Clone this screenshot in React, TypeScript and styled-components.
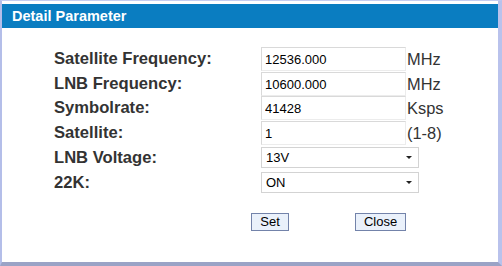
import React from 'react'
import styled, { createGlobalStyle } from 'styled-components'

const GlobalStyle = createGlobalStyle`
  html, body {
    margin: 0;
    padding: 0;
    background: #ffffff;
  }
  * {
    box-sizing: border-box;
  }
`;

type Field =
  | { label: string; kind: 'input'; value: string; unit: string; top: number }
  | { label: string; kind: 'select'; value: string; top: number };

const fields: Field[] = [
  { label: 'Satellite Frequency:', kind: 'input', value: '12536.000', unit: 'MHz', top: 0 },
  { label: 'LNB Frequency:', kind: 'input', value: '10600.000', unit: 'MHz', top: 1 },
  { label: 'Symbolrate:', kind: 'input', value: '41428', unit: 'Ksps', top: 0 },
  { label: 'Satellite:', kind: 'input', value: '1', unit: '(1-8)', top: 1 },
  { label: 'LNB Voltage:', kind: 'select', value: '13V', top: 2 },
  { label: '22K:', kind: 'select', value: 'ON', top: 4 },
];

const App: React.FC = () => {
  return (
    <>
      <GlobalStyle />
      <Frame>
        <Header>Detail Parameter</Header>
        <Body>
          <Form>
            {fields.map((f) => (
              <Row key={f.label} $top={f.top} $height={f.kind === 'input' ? 24 : 21}>
                <Label>{f.label}</Label>
                {f.kind === 'input' ? (
                  <>
                    <TextInput type="text" defaultValue={f.value} />
                    <Unit>{f.unit}</Unit>
                  </>
                ) : (
                  <SelectBox>
                    <span>{f.value}</span>
                    <Arrow />
                  </SelectBox>
                )}
              </Row>
            ))}
          </Form>
          <Buttons>
            <Button $width={38}>Set</Button>
            <Button $width={51}>Close</Button>
          </Buttons>
        </Body>
      </Frame>
    </>
  )
}

export default App

const Frame = styled.div`
  width: 502px;
  height: 266px;
  padding-top: 4px;
  border-left: 2px solid #b4bee9;
  border-right: 4px solid #b9c2ec;
  border-bottom: 4px solid #9aa3c6;
  border-top: 1px solid #c6cdf0;
  background: #ffffff;
  font-family: 'Liberation Sans', Arial, sans-serif;
  display: flex;
  flex-direction: column;
`;

const Header = styled.div`
  height: 24px;
  margin-top: -1px;
  background: #0a7dc1;
  color: #ffffff;
  font-size: 14.5px;
  font-weight: 700;
  line-height: 24px;
  padding-left: 10px;
`;

const Body = styled.div`
  padding: 19px 0 0 52px;
  display: flex;
  flex-direction: column;
`;

const Form = styled.div`
  display: flex;
  flex-direction: column;
`;

const Row = styled.div<{ $top: number; $height: number }>`
  display: flex;
  align-items: center;
  height: ${(p) => p.$height}px;
  margin-top: ${(p) => p.$top}px;
`;

const Label = styled.div`
  width: 207px;
  font-size: 16.6px;
  font-weight: 700;
  color: #333333;
`;

const TextInput = styled.input`
  width: 145px;
  height: 24px;
  margin: 0;
  padding: 0 0 0 3px;
  border: 1px solid;
  border-color: #d9d9d9 #ececec #ececec #d9d9d9;
  font-family: 'Liberation Sans', Arial, sans-serif;
  font-size: 13px;
  color: #000000;
  background: #ffffff;
  outline: none;
`;

const Unit = styled.span`
  font-size: 16.4px;
  color: #333333;
  padding-left: 1px;
`;

const SelectBox = styled.div`
  position: relative;
  width: 158px;
  height: 21px;
  border: 1px solid #d3d3d3;
  background: #ffffff;
  display: flex;
  align-items: center;
  padding-left: 4px;
  font-size: 13px;
  color: #000000;
`;

const Arrow = styled.span`
  position: absolute;
  right: 6px;
  top: 8px;
  width: 0;
  height: 0;
  border-left: 3px solid transparent;
  border-right: 3px solid transparent;
  border-top: 3px solid #222222;
`;

const Buttons = styled.div`
  display: flex;
  gap: 66px;
  padding-left: 197px;
  margin-top: 20px;
`;

const Button = styled.button<{ $width: number }>`
  width: ${(p) => p.$width}px;
  height: 18px;
  padding: 0;
  border: 1px solid #7383aa;
  background: #eaf1fb;
  font-family: 'Liberation Sans', Arial, sans-serif;
  font-size: 13px;
  color: #000000;
  line-height: 16px;
`;
